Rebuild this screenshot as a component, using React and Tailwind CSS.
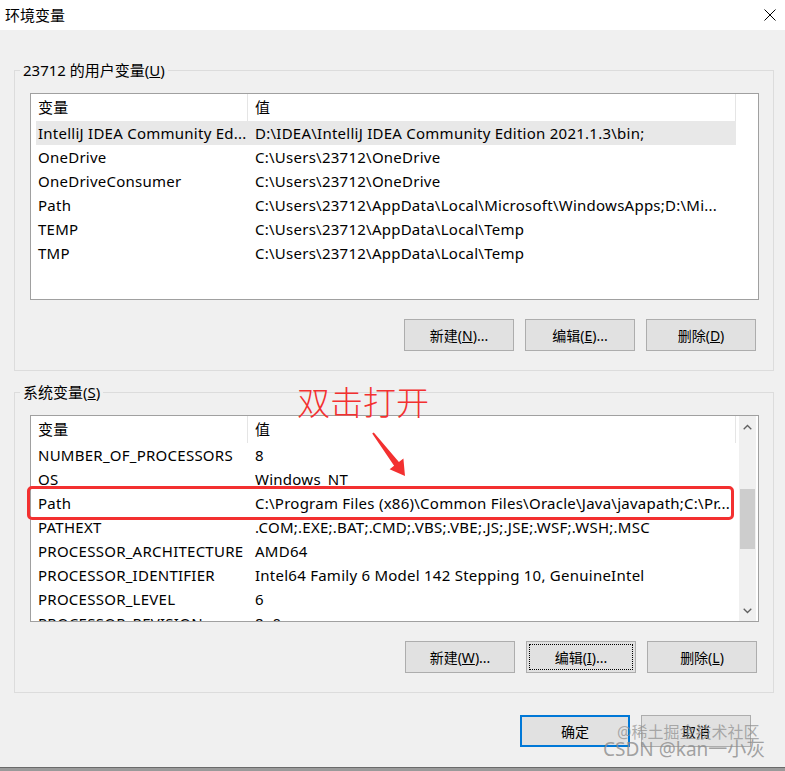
import React from "react";

const font = {
  fontFamily: '"Noto Sans", "Noto Sans CJK SC", sans-serif',
};

const userVars = [
  ["IntelliJ IDEA Community Ed...", "D:\\IDEA\\IntelliJ IDEA Community Edition 2021.1.3\\bin;"],
  ["OneDrive", "C:\\Users\\23712\\OneDrive"],
  ["OneDriveConsumer", "C:\\Users\\23712\\OneDrive"],
  ["Path", "C:\\Users\\23712\\AppData\\Local\\Microsoft\\WindowsApps;D:\\Mi..."],
  ["TEMP", "C:\\Users\\23712\\AppData\\Local\\Temp"],
  ["TMP", "C:\\Users\\23712\\AppData\\Local\\Temp"],
];

const systemVars = [
  ["NUMBER_OF_PROCESSORS", "8"],
  ["OS", "Windows_NT"],
  ["Path", "C:\\Program Files (x86)\\Common Files\\Oracle\\Java\\javapath;C:\\Pr..."],
  ["PATHEXT", ".COM;.EXE;.BAT;.CMD;.VBS;.VBE;.JS;.JSE;.WSF;.WSH;.MSC"],
  ["PROCESSOR_ARCHITECTURE", "AMD64"],
  ["PROCESSOR_IDENTIFIER", "Intel64 Family 6 Model 142 Stepping 10, GenuineIntel"],
  ["PROCESSOR_LEVEL", "6"],
  ["PROCESSOR_REVISION", "8e0a"],
];

const Mn = ({ children }) => <span className="underline">{children}</span>;

const Button = ({ children, focused, primary }) => (
  <button
    className={`relative w-[110px] h-[32px] bg-[#e1e1e1] text-[14px] text-black flex items-center justify-center ${
      primary ? "border-2 border-[#0078d7]" : "border border-[#adadad]"
    }`}
  >
    {focused && (
      <span className="absolute inset-[2px] border border-dotted border-black" />
    )}
    <span className="relative">{children}</span>
  </button>
);

const ListView = ({ rows, selected, scroll }) => (
  <div className="h-[207px] border border-[#a0a0a0] bg-white flex overflow-hidden">
    <div className="flex-1 min-w-0 pl-[5px] text-[15px] tracking-[0.25px] text-black">
      <div className="w-[700px] h-[27px] flex items-center">
        <div className="w-[212px] h-full flex items-center pl-[2px] border-r border-[#e5e5e5]">
          变量
        </div>
        <div className="flex-1 h-full flex items-center pl-[7px] border-r border-[#e5e5e5]">
          值
        </div>
      </div>
      {rows.map(([name, value], i) => (
        <div
          key={name + i}
          className={`w-[700px] h-[24px] flex items-center whitespace-nowrap ${
            i === selected ? "bg-[#e8e8e8]" : ""
          }`}
        >
          <div className="w-[212px] pl-[2px] overflow-hidden">{name}</div>
          <div className="flex-1 pl-[7px] overflow-hidden">{value}</div>
        </div>
      ))}
    </div>
    {scroll && (
      <div className="w-[19px] pr-[2px] flex flex-col">
        <div className="flex-1 bg-[#f0f0f0] flex flex-col">
          <div className="h-[21px] flex items-center justify-center">
            <svg width="9" height="6" viewBox="0 0 9 6">
              <path d="M0.7 5.3 L4.5 1.5 L8.3 5.3" fill="none" stroke="#606060" strokeWidth="1.3" />
            </svg>
          </div>
          <div className="h-[52px]" />
          <div className="h-[60px] mx-[1px] bg-[#cdcdcd]" />
          <div className="flex-1" />
          <div className="h-[21px] flex items-center justify-center">
            <svg width="9" height="6" viewBox="0 0 9 6">
              <path d="M0.7 0.7 L4.5 4.5 L8.3 0.7" fill="none" stroke="#606060" strokeWidth="1.3" />
            </svg>
          </div>
        </div>
      </div>
    )}
  </div>
);

const GroupBox = ({ label, children, className }) => (
  <fieldset className={`ml-[14px] w-[760px] border border-[#dcdcdc] ${className}`}>
    <legend className="ml-[5px] px-[3px] text-[15px] leading-[18px] text-black">
      {label}
    </legend>
    <div className="pl-[15px] pr-[14px] pt-[14px] pb-[19px]">{children}</div>
  </fieldset>
);

export default function App() {
  return (
    <div
      className="relative w-[785px] h-[771px] bg-[#f0f0f0] flex flex-col overflow-hidden"
      style={font}
    >
      <div className="h-[30px] bg-white flex items-center justify-between pl-[5px] pr-[9px] text-[15px] text-black">
        <span>环境变量</span>
        <svg width="12" height="12" viewBox="0 0 12 12">
          <path d="M0.5 0.5 L11.5 11.5 M11.5 0.5 L0.5 11.5" stroke="#000" strokeWidth="1" />
        </svg>
      </div>

      <GroupBox
        className="mt-[31px]"
        label={
          <>
            23712 的用户变量(<Mn>U</Mn>)
          </>
        }
      >
        <ListView rows={userVars} selected={0} />
        <div className="mt-[19px] flex justify-end gap-[11px] pr-[3px]">
          <Button>
            新建(<Mn>N</Mn>)...
          </Button>
          <Button>
            编辑(<Mn>E</Mn>)...
          </Button>
          <Button>
            删除(<Mn>D</Mn>)
          </Button>
        </div>
      </GroupBox>

      <GroupBox
        className="mt-[12px]"
        label={
          <>
            系统变量(<Mn>S</Mn>)
          </>
        }
      >
        <ListView rows={systemVars} scroll />
        <div className="mt-[19px] flex justify-end gap-[11px] pr-[2px]">
          <Button>
            新建(<Mn>W</Mn>)...
          </Button>
          <Button focused>
            编辑(<Mn>I</Mn>)...
          </Button>
          <Button>
            删除(<Mn>L</Mn>)
          </Button>
        </div>
      </GroupBox>

      <div className="mt-[22px] flex justify-end gap-[11px] pr-[34px]">
        <Button primary>确定</Button>
        <Button>取消</Button>
      </div>

      <div className="mt-auto h-[4px] border-t border-[#6a6a6a] bg-[#9a9a9a]" />

      {/* annotations */}
      <div className="absolute left-[297px] top-[383px] text-[33px] leading-[40px] font-light text-[#f33030]">
        双击打开
      </div>
      <svg
        className="absolute left-[365px] top-[425px]"
        width="50"
        height="55"
        viewBox="0 0 50 55"
      >
        <polygon
          points="8.8,7.4 33.9,37.1 38.4,33.6 40,51 24.6,44.2 29.1,40.7 7.2,8.6"
          fill="#f33030"
        />
      </svg>
      <div className="absolute left-[27px] top-[486px] w-[707px] h-[34px] border-[3px] border-[#f33030] rounded-[5px]" />

      <div className="absolute left-[617px] top-[721px] text-[16px] leading-[22px] text-[#8c8c8c]/70 pointer-events-none">
        @稀土掘金技术社区
      </div>
      <div className="absolute left-[603px] top-[737px] text-[19px] leading-[24px] text-[#8c8c8c]/80 pointer-events-none">
        CSDN @kan一小灰
      </div>
    </div>
  );
}
